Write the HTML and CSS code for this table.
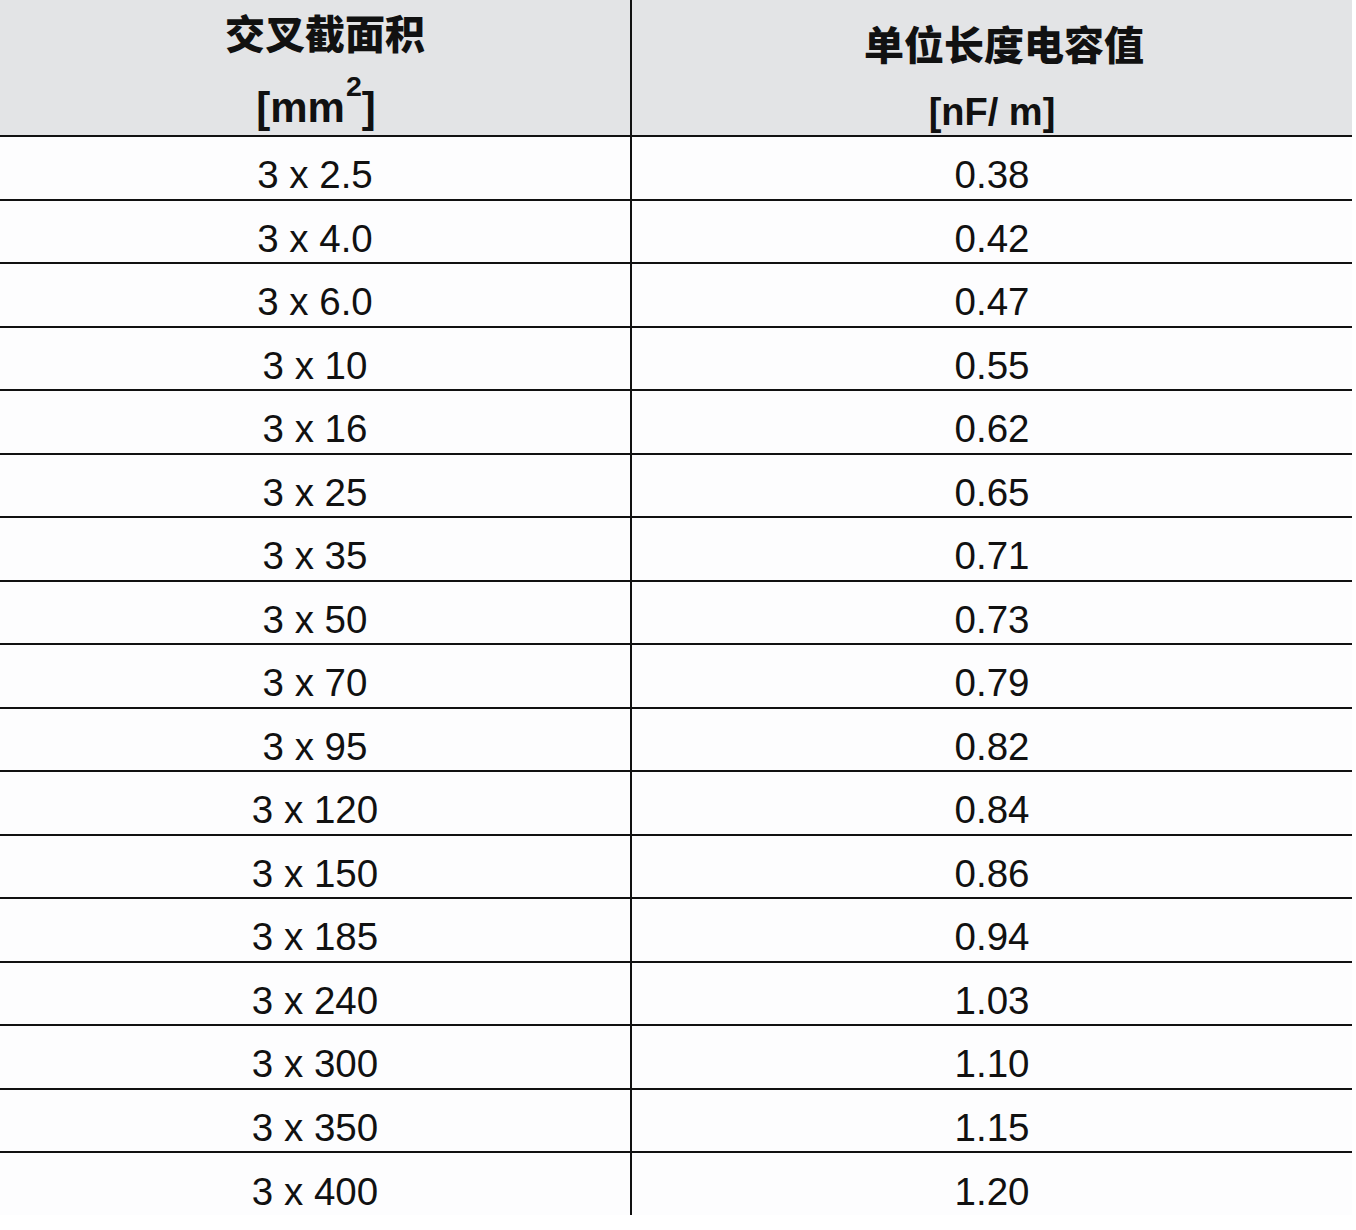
FILE: index.html
```html
<!DOCTYPE html>
<html lang="zh-CN">
<head>
<meta charset="utf-8">
<title>单位长度电容值</title>
<link rel="stylesheet" href="styles.css">
</head>
<body>
<div class="table">
  <div class="cell head left">
    <span class="h-cn h-cn-left">交叉截面积</span>
    <span class="h-unit h-unit-left">[mm<sup class="sq">2</sup>]</span>
  </div>
  <div class="cell head right">
    <span class="h-cn h-cn-right">单位长度电容值</span>
    <span class="h-unit h-unit-right">[nF/ m]</span>
  </div>

  <div class="cell left">3 x 2.5</div><div class="cell right">0.38</div>
  <div class="cell left">3 x 4.0</div><div class="cell right">0.42</div>
  <div class="cell left">3 x 6.0</div><div class="cell right">0.47</div>
  <div class="cell left">3 x 10</div><div class="cell right">0.55</div>
  <div class="cell left">3 x 16</div><div class="cell right">0.62</div>
  <div class="cell left">3 x 25</div><div class="cell right">0.65</div>
  <div class="cell left">3 x 35</div><div class="cell right">0.71</div>
  <div class="cell left">3 x 50</div><div class="cell right">0.73</div>
  <div class="cell left">3 x 70</div><div class="cell right">0.79</div>
  <div class="cell left">3 x 95</div><div class="cell right">0.82</div>
  <div class="cell left">3 x 120</div><div class="cell right">0.84</div>
  <div class="cell left">3 x 150</div><div class="cell right">0.86</div>
  <div class="cell left">3 x 185</div><div class="cell right">0.94</div>
  <div class="cell left">3 x 240</div><div class="cell right">1.03</div>
  <div class="cell left">3 x 300</div><div class="cell right">1.10</div>
  <div class="cell left">3 x 350</div><div class="cell right">1.15</div>
  <div class="cell left last">3 x 400</div><div class="cell right last">1.20</div>
</div>
</body>
</html>
```

FILE: styles.css
```css
* {
  box-sizing: border-box;
}

html, body {
  margin: 0;
  padding: 0;
  background: #ffffff;
}

body {
  font-family: "Liberation Sans", Arial, "Noto Sans CJK SC", sans-serif;
  color: #111111;
}

.table {
  display: grid;
  width: 1352px;
  grid-template-columns: 632px 720px;
  grid-template-rows: 137px repeat(16, 63.5px) 62px;
  background: #fdfdfe;
}

.cell {
  display: flex;
  align-items: center;
  justify-content: center;
  padding-top: 15px;
  border-bottom: 2px solid #111111;
  font-size: 38.5px;
  line-height: normal;
  white-space: pre;
}

.cell.left {
  border-right: 2px solid #111111;
}

.cell.last {
  border-bottom: none;
  padding-top: 16px;
}

.cell.head {
  background: #e3e4e6;
  flex-direction: column;
  justify-content: flex-start;
  padding-top: 0;
}

.h-cn {
  display: block;
  font-family: "Noto Sans CJK SC", "Noto Sans CJK JP", sans-serif;
  font-weight: 900;
  font-size: 40px;
  line-height: 40px;
  color: #111111;
}

.h-cn-left {
  margin-top: 12px;
  margin-left: 20px;
}

.h-cn-right {
  margin-top: 23px;
  margin-left: 24px;
}

.h-unit {
  display: block;
  font-family: "Liberation Sans", Arial, sans-serif;
  font-weight: 700;
  color: #111111;
}

.h-unit-left {
  font-size: 42px;
  line-height: 42px;
  margin-top: 34px;
  margin-left: 2px;
}

.h-unit-right {
  font-size: 38px;
  line-height: 38px;
  margin-top: 30px;
}

.sq {
  font-size: 0.68em;
  line-height: 0;
  vertical-align: 0.92em;
  margin-left: 1px;
}
```
